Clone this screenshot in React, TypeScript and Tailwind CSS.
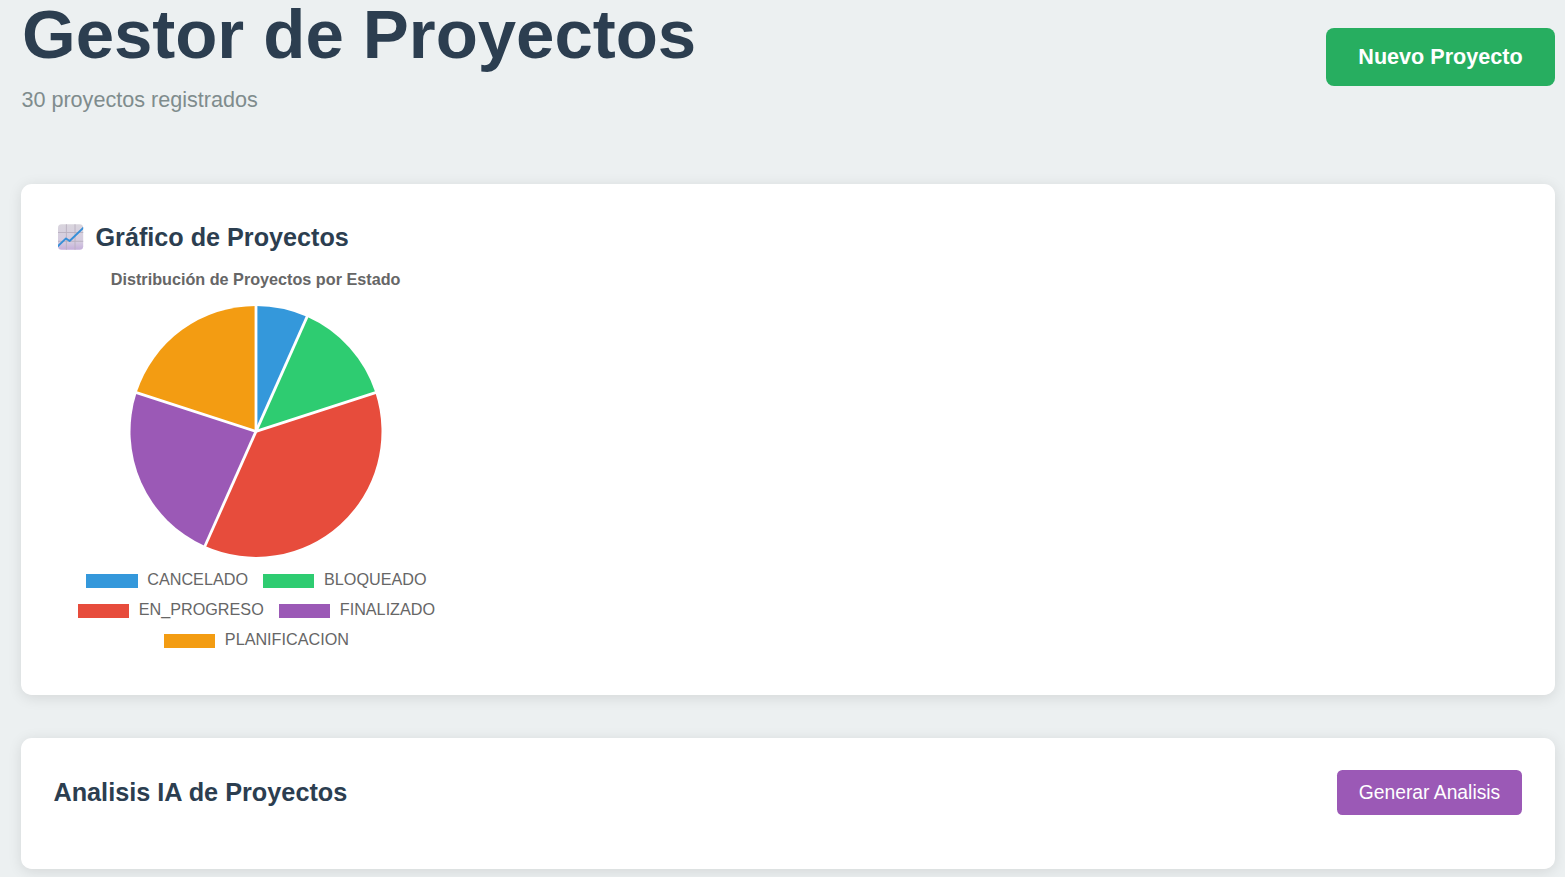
const slices = [
  { label: 'CANCELADO', value: 2, color: '#3498db' },
  { label: 'BLOQUEADO', value: 4, color: '#2ecc71' },
  { label: 'EN_PROGRESO', value: 11, color: '#e74c3c' },
  { label: 'FINALIZADO', value: 7, color: '#9b59b6' },
  { label: 'PLANIFICACION', value: 6, color: '#f39c12' },
];

const legendRows = [slices.slice(0, 2), slices.slice(2, 4), slices.slice(4)];

const CENTER_X = 128;
const CENTER_Y = 128.4;
const RADIUS = 125.5;

function point(fraction: number, radius: number) {
  const angle = fraction * Math.PI * 2;
  return [CENTER_X + radius * Math.sin(angle), CENTER_Y - radius * Math.cos(angle)];
}

function PieChart() {
  const total = slices.reduce((sum, s) => sum + s.value, 0);
  let acc = 0;
  const arcs = slices.map((s) => {
    const start = acc / total;
    acc += s.value;
    return { ...s, start, end: acc / total };
  });
  return (
    <svg width="256" height="256" viewBox="0 0 256 256" className="block">
      {arcs.map((a) => {
        const [x1, y1] = point(a.start, RADIUS);
        const [x2, y2] = point(a.end, RADIUS);
        return (
          <path
            key={a.label}
            fill={a.color}
            d={`M${CENTER_X} ${CENTER_Y}L${x1} ${y1}A${RADIUS} ${RADIUS} 0 0 1 ${x2} ${y2}Z`}
          />
        );
      })}
      {arcs.map((a) => {
        const [x, y] = point(a.start, RADIUS + 1);
        return <line key={a.label} x1={CENTER_X} y1={CENTER_Y} x2={x} y2={y} stroke="#fff" strokeWidth="2.8" />;
      })}
    </svg>
  );
}

function ChartIcon() {
  return (
    <svg width="26" height="26" viewBox="0 0 26 26" className="block shrink-0">
      <defs>
        <linearGradient id="tile" x1="0" y1="0" x2="0" y2="1">
          <stop offset="0" stopColor="#d9d5dd" />
          <stop offset="0.7" stopColor="#d5cbe0" />
          <stop offset="1" stopColor="#c4aeda" />
        </linearGradient>
        <clipPath id="tileClip">
          <rect x="0" y="0.2" width="25.2" height="25.6" rx="3.6" />
        </clipPath>
      </defs>
      <g clipPath="url(#tileClip)">
        <rect width="26" height="26" fill="url(#tile)" />
        <path d="M8.4 0V26M17 0V26M0 8.5H26M0 17.3H26" stroke="#b9b0c0" strokeWidth="0.9" />
        <path d="M-0.5 22.6L8 14.4L11.6 17L26 3.2" fill="none" stroke="#368fd8" strokeWidth="1.9" strokeLinejoin="round" />
      </g>
    </svg>
  );
}

export default function App() {
  return (
    <div className="h-[877px] overflow-hidden bg-[#ecf0f1] pl-[21px] pr-[10px] font-['Liberation_Sans',Arial,sans-serif]">
      <header className="flex h-[184px] items-start justify-between">
        <div>
          <h1 className="pl-px text-[69px] font-bold leading-[70px] tracking-[-0.04px] text-[#2c3e50]">Gestor de Proyectos</h1>
          <p className="mt-[17px] pl-[0.4px] text-[21.6px] leading-[26px] text-[#7f8c8d]">30 proyectos registrados</p>
        </div>
        <button className="mt-7 flex h-[58px] w-[229px] items-center justify-center rounded-lg bg-[#27ae60] text-[21.6px] font-bold text-white">
          Nuevo Proyecto
        </button>
      </header>

      <section className="h-[511px] rounded-[10.8px] bg-white px-8 pt-[39px] shadow-[0_2.7px_13.5px_rgba(0,0,0,0.1)]">
        <h3 className="flex h-7 items-center gap-[11.5px] pl-[5px] text-[25.2px] font-bold text-[#2c3e50]">
          <ChartIcon />
          <span className="pt-[2px]">Gráfico de Proyectos</span>
        </h3>
        <div className="flex w-[406px] flex-col items-center pt-[18px]">
          <p className="h-5 pr-[0.8px] text-[16.2px] font-bold leading-5 text-[#666]">Distribución de Proyectos por Estado</p>
          <div className="mt-[14px]">
            <PieChart />
          </div>
          <div className="mt-[6px] flex flex-col pl-[0.8px]">
            {legendRows.map((row, i) => (
              <div key={i} className="flex h-[30px] items-center justify-center gap-[15px]">
                {row.map((item) => (
                  <div key={item.label} className="flex items-center gap-[9.5px] text-[16.2px] text-[#666]">
                    <span className="mt-[1.8px] h-[13.5px] w-[51.5px]" style={{ backgroundColor: item.color }} />
                    <span className="pb-[1px] leading-[19px]">{item.label}</span>
                  </div>
                ))}
              </div>
            ))}
          </div>
        </div>
      </section>

      <section className="mt-[43px] flex h-[131px] items-start justify-between rounded-[10.8px] bg-white pl-8 pr-[33px] pt-8 shadow-[0_2.7px_13.5px_rgba(0,0,0,0.1)]">
        <h3 className="pl-[0.4px] text-[25.27px] font-bold leading-[45px] text-[#2c3e50]">Analisis IA de Proyectos</h3>
        <button className="flex h-[45px] w-[185px] items-center justify-center rounded-[5.4px] bg-[#9b59b6] pt-px text-[19.3px] text-white">
          Generar Analisis
        </button>
      </section>
    </div>
  );
}
